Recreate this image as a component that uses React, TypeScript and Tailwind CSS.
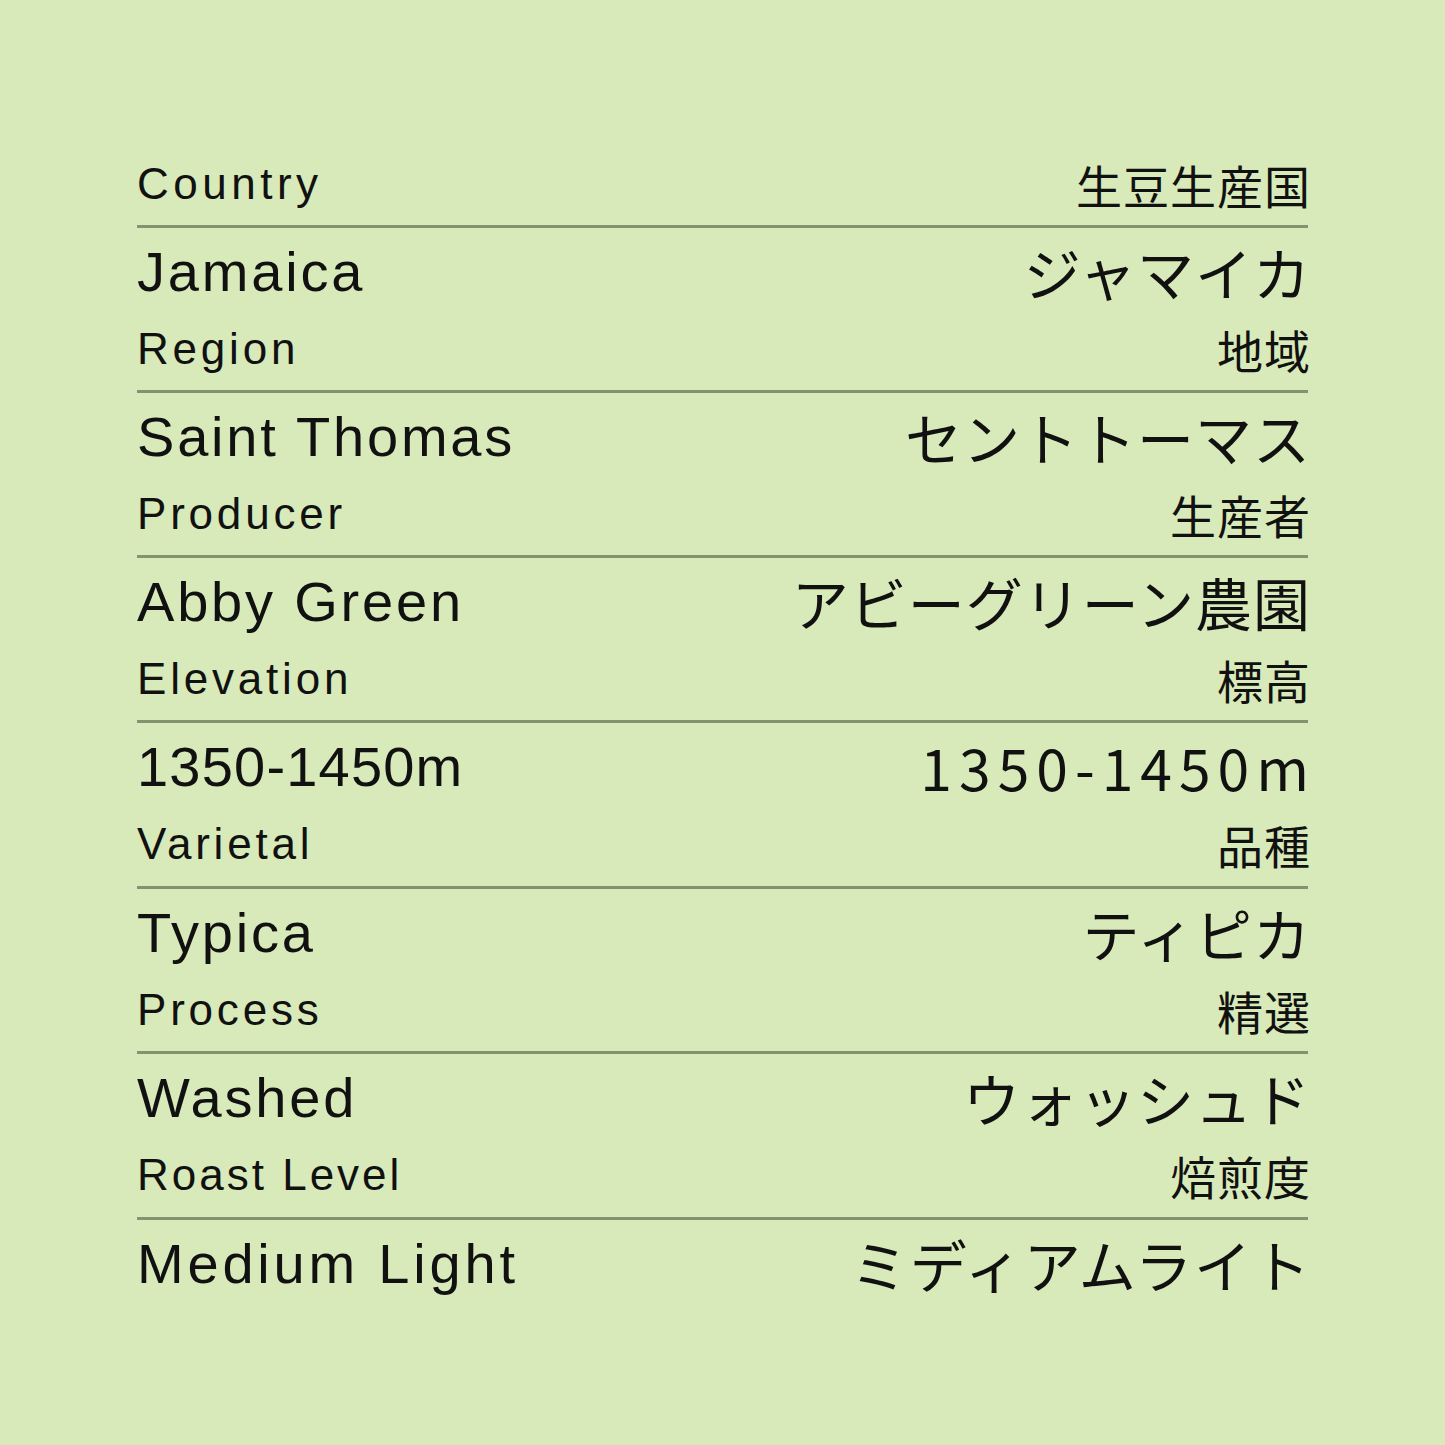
import React from "react";

type Item = {
  en: string;
  ja: string;
  labelEn: string;
  labelJa: string;
  extra?: boolean;
  labelClass?: string;
  enClass?: string;
  jaClass?: string;
};

const items: Item[] = [
  { labelEn: "Country", labelJa: "生豆生産国", en: "Jamaica", ja: "ジャマイカ", labelClass: "tracking-[4.5px]" },
  { labelEn: "Region", labelJa: "地域", en: "Saint Thomas", ja: "セントトーマス" },
  { labelEn: "Producer", labelJa: "生産者", en: "Abby Green", ja: "アビーグリーン農園" },
  {
    labelEn: "Elevation",
    labelJa: "標高",
    en: "1350-1450m",
    ja: "1350-1450m",
    enClass: "tracking-[1.2px]",
    jaClass: "tracking-[7px] mr-[-8px]",
  },
  { labelEn: "Varietal", labelJa: "品種", en: "Typica", ja: "ティピカ", extra: true },
  { labelEn: "Process", labelJa: "精選", en: "Washed", ja: "ウォッシュド" },
  {
    labelEn: "Roast Level",
    labelJa: "焙煎度",
    en: "Medium Light",
    ja: "ミディアムライト",
    extra: true,
    labelClass: "tracking-[3px]",
    enClass: "tracking-[3.8px]",
    jaClass: "tracking-[2px] mr-[-4px]",
  },
];

const latin = "font-['Liberation_Sans',Arial,sans-serif]";
const cjk = "font-['Noto_Sans_CJK_JP',sans-serif]";

function LabelRow({ en, ja, extra, labelClass }: { en: string; ja: string; extra?: boolean; labelClass?: string }) {
  return (
    <div className={`flex justify-between items-start ${extra ? "h-[87px]" : "h-[86px]"}`}>
      <span className={`${latin} text-[44px] leading-[90px] text-[#111] ${labelClass ?? "tracking-[3.8px]"}`}>{en}</span>
      <span className={`${cjk} text-[46px] leading-[90px] tracking-[1px] mr-[-3px] text-[#111]`}>{ja}</span>
    </div>
  );
}

function ValueRow({ en, ja, enClass, jaClass }: { en: string; ja: string; enClass?: string; jaClass?: string }) {
  return (
    <div className="flex justify-between items-start h-[76px]">
      <span className={`${latin} text-[56px] leading-[87px] text-[#111] ${enClass ?? "tracking-[2.8px]"}`}>{en}</span>
      <span className={`${cjk} text-[57px] leading-[87px] text-[#111] ${jaClass ?? "tracking-[1px] mr-[-3px]"}`}>{ja}</span>
    </div>
  );
}

export default function App() {
  return (
    <div className="w-[1445px] h-[1445px] bg-[#d8eab9] px-[137px] pt-[139px] overflow-hidden">
      {items.map((it, i) => (
        <div key={i}>
          <LabelRow en={it.labelEn} ja={it.labelJa} extra={it.extra} labelClass={it.labelClass} />
          <div className="h-[3px] bg-[#84936f]" />
          <ValueRow en={it.en} ja={it.ja} enClass={it.enClass} jaClass={it.jaClass} />
        </div>
      ))}
    </div>
  );
}
